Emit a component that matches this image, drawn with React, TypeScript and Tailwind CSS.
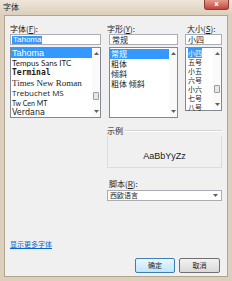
import React from "react";

const Up = () => (
  <svg width="5" height="3" viewBox="0 0 5 3"><path d="M0 3 L2.5 0 L5 3Z" fill="#606060" /></svg>
);
const Down = () => (
  <svg width="5" height="3" viewBox="0 0 5 3"><path d="M0 0 L2.5 3 L5 0Z" fill="#606060" /></svg>
);

function Scroll({ thumb, thumbTop }: { thumb: boolean; thumbTop?: number }) {
  return (
    <div className="w-[8px] h-full flex flex-col items-center justify-between py-[4px] bg-[#fafafa]">
      <Up />
      <div className="flex-1 w-full flex flex-col items-center">
        {thumb && (
          <div className="w-[6px] h-[8px] border border-[#9a9a9a] bg-[#e8e8e8] rounded-[1px]" style={{ marginTop: thumbTop }} />
        )}
      </div>
      <Down />
    </div>
  );
}

export default function App() {
  const fonts: { name: string; cls: string }[] = [
    { name: "Tempus Sans ITC", cls: "font-['Lato',sans-serif] text-[8px]" },
    { name: "Terminal", cls: "font-['DejaVu_Sans_Mono',monospace] text-[8px] font-bold" },
    { name: "Times New Roman", cls: "font-['Liberation_Serif',serif] text-[9px]" },
    { name: "Trebuchet MS", cls: "font-['Open_Sans',sans-serif] text-[8px]" },
    { name: "Tw Cen MT", cls: "font-['Lato',sans-serif] text-[7px]" },
    { name: "Verdana", cls: "font-['DejaVu_Sans',sans-serif] text-[8px]" },
  ];
  const styles = ["粗体", "倾斜", "粗体 倾斜"];
  const sizes = ["五号", "小五", "六号", "小六", "七号", "八号"];
  return (
    <div className="w-[232px] h-[281px] bg-[#dccfbb] flex flex-col font-['Noto_Sans_CJK_SC',sans-serif] text-[#1a1a1a] overflow-hidden">
      {/* title bar */}
      <div className="h-[15px] flex justify-between items-start bg-gradient-to-b from-[#eee6da] to-[#dccfbb]">
        <span className="text-[8px] leading-[8px] mt-[3px] ml-[3px]">字体</span>
        <div className="w-[25px] h-[10px] mr-[3px] rounded-b-[3px] bg-gradient-to-b from-[#e49a8e] to-[#c4433a] border border-t-0 border-[#8d3b33] flex items-center justify-center">
          <span className="text-white text-[7px] leading-[7px] font-bold font-['DejaVu_Sans',sans-serif]">x</span>
        </div>
      </div>
      {/* inner */}
      <div className="flex-1 px-[4px] pb-[4px] flex">
        <div className="flex-1 border border-[#b3a48e] bg-[#f0f0f0] flex flex-col">
          {/* three columns */}
          <div className="flex pl-[5px] pt-[8px]">
            {/* col 1 */}
            <div className="w-[91px] flex flex-col">
              <div className="h-[9px] text-[8px] leading-[9px] mb-[1px]">字体(<span className="underline">F</span>):</div>
              <div className="h-[11px] bg-white border border-[#abadb3] flex items-center pl-[1px]">
                <span className="bg-[#3399ff] text-white text-[8px] leading-[8px] px-[1px] font-['Liberation_Sans',sans-serif]">Tahoma</span>
              </div>
              <div className="h-[71px] mt-[2px] bg-white border border-[#828790] flex">
                <div className="flex-1 flex flex-col">
                  <div className="h-[10px] bg-[#3399ff] text-white text-[9px] leading-[10px] pl-[1px] font-['Liberation_Sans',sans-serif]">Tahoma</div>
                  {fonts.map((f) => (
                    <div key={f.name} className={`h-[10px] leading-[10px] pl-[1px] whitespace-nowrap ${f.cls}`}>{f.name}</div>
                  ))}
                </div>
                <Scroll thumb thumbTop={37} />
              </div>
            </div>
            {/* col 2 */}
            <div className="w-[69px] ml-[8px] flex flex-col">
              <div className="h-[9px] text-[8px] leading-[9px] mb-[1px] -ml-[2px]">字形(<span className="underline">Y</span>):</div>
              <div className="h-[11px] bg-white border border-[#abadb3] flex items-center pl-[2px] text-[8px] leading-[8px]">常规</div>
              <div className="h-[71px] mt-[2px] bg-white border border-[#828790] flex">
                <div className="flex-1 flex flex-col pt-[1px]">
                  <div className="h-[10px] bg-[#3399ff] text-white text-[8px] leading-[10px] pl-[1px]">常规</div>
                  {styles.map((s) => (
                    <div key={s} className="h-[10px] text-[8px] leading-[10px] pl-[1px] whitespace-pre">{s}</div>
                  ))}
                </div>
                <Scroll thumb={false} />
              </div>
            </div>
            {/* col 3 */}
            <div className="w-[37px] ml-[7px] flex flex-col">
              <div className="h-[9px] text-[8px] leading-[9px] mb-[1px] ml-[2px]">大小(<span className="underline">S</span>):</div>
              <div className="h-[11px] bg-white border border-[#abadb3] flex items-center pl-[2px] text-[8px] leading-[8px]">小四</div>
              <div className="h-[64px] mt-[2px] bg-white border border-[#828790] flex">
                <div className="flex-1 flex flex-col pt-[1px] pl-[1px]">
                  <div className="h-[9px] text-[7px] leading-[9px] pl-[1px]">
                    <span className="bg-[#3399ff] text-white">小四</span>
                  </div>
                  {sizes.map((s) => (
                    <div key={s} className="h-[9px] text-[7px] leading-[9px] pl-[1px]">{s}</div>
                  ))}
                </div>
                <Scroll thumb thumbTop={30} />
              </div>
            </div>
          </div>
          {/* sample + script */}
          <div className="ml-[102px] mr-[5px] mt-[9px] flex flex-col">
            <div className="flex items-center h-[8px]">
              <span className="text-[8px] leading-[8px] mr-[2px]">示例</span>
              <div className="flex-1 h-[2px] border-t border-[#d5d5d5] border-b border-b-white" />
            </div>
            <div className="h-[32px] mt-[1px] border border-[#dcdcdc] border-t-0 flex items-center justify-center">
              <span className="text-[9px] leading-[9px] font-['Liberation_Sans',sans-serif] mt-[10px]">AaBbYyZz</span>
            </div>
            <div className="mt-[12px] h-[8px] text-[8px] leading-[8px] ml-[2px]">脚本(<span className="underline">R</span>):</div>
            <div className="mt-[2px] h-[11px] bg-white border border-[#abadb3] flex items-center justify-between pl-[2px] pr-[3px] text-[7px] leading-[7px]">
              <span>西欧语言</span>
              <Down />
            </div>
          </div>
          {/* link */}
          <div className="mt-[39px] ml-[5px] text-[7px] leading-[8px] text-[#0066cc] underline">显示更多字体</div>
          {/* buttons */}
          <div className="mt-[10px] flex justify-end gap-[4px] mr-[7px]">
            <div className="w-[40px] h-[15px] border border-[#3c7fb1] rounded-[2px] bg-gradient-to-b from-[#eaf6fd] to-[#bee6fd] flex items-center justify-center text-[7px] leading-[7px]">确定</div>
            <div className="w-[41px] h-[15px] border border-[#707070] rounded-[2px] bg-gradient-to-b from-[#f2f2f2] to-[#d9d9d9] flex items-center justify-center text-[7px] leading-[7px]">取消</div>
          </div>
        </div>
      </div>
    </div>
  );
}
